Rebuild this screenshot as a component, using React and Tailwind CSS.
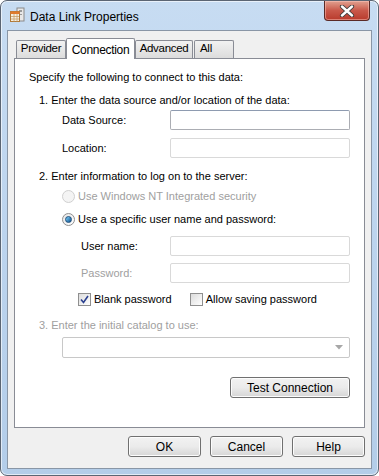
import React from 'react'

const font = { fontFamily: '"Liberation Sans", Arial, sans-serif' }

function TextBox({ disabled }) {
  return (
    <div
      className={`h-[20px] w-[180px] rounded-[2px] border bg-white ${
        disabled ? 'border-[#d9d9d9]' : 'border-[#abadb3] border-t-[#8e9bb0]'
      }`}
    />
  )
}

function Radio({ checked, disabled }) {
  return (
    <span
      className={`flex h-[13px] w-[13px] items-center justify-center rounded-full border ${
        disabled ? 'border-[#d0d0d0] bg-[#f4f4f4]' : 'border-[#8f8f8f] bg-gradient-to-br from-[#e6e6e6] to-white'
      }`}
    >
      {checked && (
        <span className="h-[7px] w-[7px] rounded-full border border-[#1e4d7a] bg-gradient-to-br from-[#7fd6ff] to-[#0a4f8c]" />
      )}
    </span>
  )
}

function Check({ checked }) {
  return (
    <span className="flex h-[13px] w-[13px] items-center justify-center border border-[#8f8f8f] bg-gradient-to-br from-[#dcdcdc] to-white">
      {checked && (
        <svg width="9" height="9" viewBox="0 0 9 9">
          <path d="M1 4.5 L3.5 7.5 L8 1" fill="none" stroke="#2a3f8f" strokeWidth="1.6" />
        </svg>
      )}
    </span>
  )
}

function Button({ children, w }) {
  return (
    <div
      className={`${w} flex h-[21px] items-center justify-center rounded-[3px] border border-[#707070] bg-gradient-to-b from-[#f2f2f2] via-[#ebebeb] to-[#d6d6d6] text-[12px] text-black shadow-[inset_0_0_0_1px_#fcfcfc]`}
    >
      {children}
    </div>
  )
}

function Tab({ label, active, w, left }) {
  if (active) {
    return (
      <div className={`${w} relative z-10 -mb-px flex h-[21px] items-start justify-center rounded-t-[2px] border border-b-0 border-[#898c95] bg-white pt-[2px] text-[12px] tracking-[-0.3px]`}>
        {label}
      </div>
    )
  }
  return (
    <div
      className={`${w} flex h-[18px] items-end rounded-t-[2px] border border-b-0 border-[#898c95] bg-gradient-to-b from-[#f2f2f2] to-[#dcdcdc] pb-[1px] text-[11.5px] tracking-[-0.3px] ${
        left ? 'justify-start pl-[5px]' : 'justify-center'
      }`}
    >
      {label}
    </div>
  )
}

function CloseButton() {
  return (
    <div className="mr-[8px] flex h-[20px] w-[46px] items-center justify-center rounded-b-[4px] border border-t-0 border-[#5a2a26] bg-gradient-to-b from-[#e0a090] via-[#c9584a] to-[#b83a2c] shadow-[inset_0_0_0_1px_rgba(255,200,190,0.5)]">
      <svg width="16" height="12" viewBox="0 0 16 12">
        <path d="M3 1.5 L13 10.5 M13 1.5 L3 10.5" stroke="#3b3b3b" strokeWidth="4.2" strokeLinecap="round" />
        <path d="M3 1.5 L13 10.5 M13 1.5 L3 10.5" stroke="#ffffff" strokeWidth="2.4" strokeLinecap="round" />
      </svg>
    </div>
  )
}

function AppIcon() {
  return (
    <svg width="16" height="16" viewBox="0 0 16 16">
      <rect x="8" y="1" width="7" height="13" fill="#e8e8e8" stroke="#8a8a8a" />
      <rect x="10" y="3" width="3" height="2" fill="#9a9a9a" />
      <rect x="10" y="7" width="3" height="1" fill="#9a9a9a" />
      <rect x="1.5" y="4.5" width="9" height="10" fill="#f6f0e2" stroke="#b07a3a" />
      <rect x="1.5" y="4.5" width="9" height="2.5" fill="#e07a2c" />
      <path d="M2 9.5 H10 M2 12 H10 M5 7 V14.5 M8 7 V14.5" stroke="#c9a06a" strokeWidth="0.8" />
    </svg>
  )
}

export default function App() {
  return (
    <div className="h-[476px] w-[379px] bg-white" style={font}>
      <div className="flex h-[476px] w-[379px] flex-col rounded-[7px] border border-[#5b6573] bg-gradient-to-b from-[#c7dcf2] via-[#bcd4ee] to-[#b3cde9] shadow-[inset_0_0_0_1px_rgba(255,255,255,0.6)]">
        <div className="flex h-[29px] shrink-0 items-start">
          <div className="ml-[8px] mt-[6px]">
            <AppIcon />
          </div>
          <div className="ml-[5px] mt-[7px] text-[12px] text-black">Data Link Properties</div>
          <div className="flex-1" />
          <CloseButton />
        </div>

        <div className="mx-[6px] mb-[6px] flex flex-1 flex-col border border-[#8996a6] bg-[#f0f0f0] px-[6px]">
          <div className="mt-[7px] flex items-end pl-[2px]">
            <Tab label="Provider" w="w-[50px]" />
            <Tab label="Connection" w="w-[69px]" active />
            <Tab label="Advanced" w="w-[58px]" />
            <div className="w-[1px]" />
            <Tab label="All" w="w-[40px]" left />
          </div>

          <div className="flex h-[370px] flex-col border border-[#898c95] bg-white pl-[14px] pr-[14px] text-[11px] text-black">
            <div className="mt-[12px] leading-[13px]">Specify the following to connect to this data:</div>
            <div className="ml-[10px] mt-[10px] leading-[13px]">1. Enter the data source and/or location of the data:</div>

            <div className="mt-[3px] flex h-[20px] items-center">
              <div className="ml-[33px] flex-1">Data Source:</div>
              <TextBox />
            </div>
            <div className="mt-[8px] flex h-[20px] items-center">
              <div className="ml-[33px] flex-1">Location:</div>
              <TextBox disabled />
            </div>

            <div className="ml-[10px] mt-[12px] leading-[13px]">2. Enter information to log on to the server:</div>

            <div className="ml-[33px] mt-[6px] flex h-[14px] items-center gap-[3px]">
              <Radio disabled />
              <span className="text-[#a0a0a0]">Use Windows NT Integrated security</span>
            </div>
            <div className="ml-[33px] mt-[9px] flex h-[14px] items-center gap-[3px]">
              <Radio checked />
              <span>Use a specific user name and password:</span>
            </div>

            <div className="mt-[10px] flex h-[20px] items-center">
              <div className="ml-[52px] flex-1">User name:</div>
              <TextBox disabled />
            </div>
            <div className="mt-[7px] flex h-[20px] items-center">
              <div className="ml-[52px] flex-1 text-[#a0a0a0]">Password:</div>
              <TextBox disabled />
            </div>

            <div className="ml-[49px] mt-[8px] flex h-[16px] items-center">
              <Check checked />
              <span className="ml-[3px]">Blank password</span>
              <span className="ml-[18px]">
                <Check />
              </span>
              <span className="ml-[3px]">Allow saving password</span>
            </div>

            <div className="ml-[10px] mt-[12px] leading-[13px] text-[#a0a0a0]">3. Enter the initial catalog to use:</div>

            <div className="ml-[33px] mt-[5px] flex h-[21px] items-center justify-end rounded-[2px] border border-[#c8c8c8] bg-white pr-[6px]">
              <svg width="8" height="5" viewBox="0 0 8 5">
                <path d="M0 0 H8 L4 4.5 Z" fill="#a7a7a7" />
              </svg>
            </div>

            <div className="mt-[19px] flex justify-end">
              <Button w="w-[120px]">Test Connection</Button>
            </div>
          </div>

          <div className="mt-[8px] flex justify-end gap-[9px]">
            <Button w="w-[73px]">OK</Button>
            <Button w="w-[73px]">Cancel</Button>
            <Button w="w-[73px]">Help</Button>
          </div>
        </div>
      </div>
    </div>
  )
}
